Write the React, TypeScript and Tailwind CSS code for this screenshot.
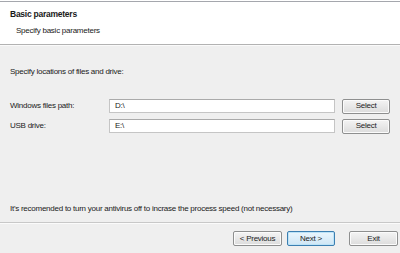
import React from "react";

const font = { fontFamily: '"Liberation Sans", Arial, sans-serif' };

function Btn({ children, primary = false, w = "w-[49px]" }: { children: React.ReactNode; primary?: boolean; w?: string }) {
  return (
    <div
      className={`${w} h-[15px] rounded-[2px] border flex items-center justify-center text-[8px] text-[#222] ${
        primary
          ? "border-[#3c7fb1] bg-gradient-to-b from-[#eaf6fd] to-[#cfe6f5] shadow-[inset_0_0_0_1px_#bde3f7]"
          : "border-[#8e8f8f] bg-gradient-to-b from-[#f4f4f4] to-[#dcdcdc] shadow-[inset_0_0_0_1px_#fbfbfb]"
      }`}
    >
      {children}
    </div>
  );
}

export default function App() {
  return (
    <div className="w-[400px] h-[253px] bg-[#efefef] flex flex-col overflow-hidden text-[#1a1a1a] tracking-[-0.25px]" style={font}>
      <div className="h-[1px] bg-white" />
      <div className="h-[1px] bg-[#a5a7ad]" />
      <div className="h-[42px] bg-white flex flex-col pl-[10px] pt-[7px]">
        <div className="text-[8.5px] font-bold leading-[11px]">Basic parameters</div>
        <div className="text-[8px] leading-[11px] pl-[6px] mt-[5px]">Specify basic parameters</div>
      </div>
      <div className="h-[1px] bg-[#b2b2b2]" />
      <div className="h-[1px] bg-[#fafafa]" />
      <div className="flex flex-col pl-[10px] pr-[10px]">
        <div className="text-[8px] leading-[11px] mt-[20px]">Specify locations of files and drive:</div>
        <div className="flex items-center mt-[21px] h-[16px]">
          <div className="w-[99px] text-[8px]">Windows files path:</div>
          <div className="w-[226px] h-[14px] bg-white border border-[#c5c5c5] border-t-[#aaaaaa] flex items-center pl-[5px] text-[8px]">D:\</div>
          <div className="ml-[7px]"><Btn w="w-[48px]">Select</Btn></div>
        </div>
        <div className="flex items-center mt-[4px] h-[16px]">
          <div className="w-[99px] text-[8px]">USB drive:</div>
          <div className="w-[226px] h-[14px] bg-white border border-[#c5c5c5] border-t-[#aaaaaa] flex items-center pl-[5px] text-[8px]">E:\</div>
          <div className="ml-[7px]"><Btn w="w-[48px]">Select</Btn></div>
        </div>
        <div className="text-[8px] leading-[11px] mt-[69px]">It's recomended to turn your antivirus off to incrase the process speed (not necessary)</div>
      </div>
      <div className="mt-[8px] h-[1px] bg-[#c8c8c8]" />
      <div className="h-[1px] bg-[#fbfbfb]" />
      <div className="flex mt-[7px] pl-[233px]">
        <Btn>&lt; Previous</Btn>
        <div className="ml-[5px]"><Btn primary w="w-[48px]">Next &gt;</Btn></div>
        <div className="ml-[14px]"><Btn>Exit</Btn></div>
      </div>
    </div>
  );
}
